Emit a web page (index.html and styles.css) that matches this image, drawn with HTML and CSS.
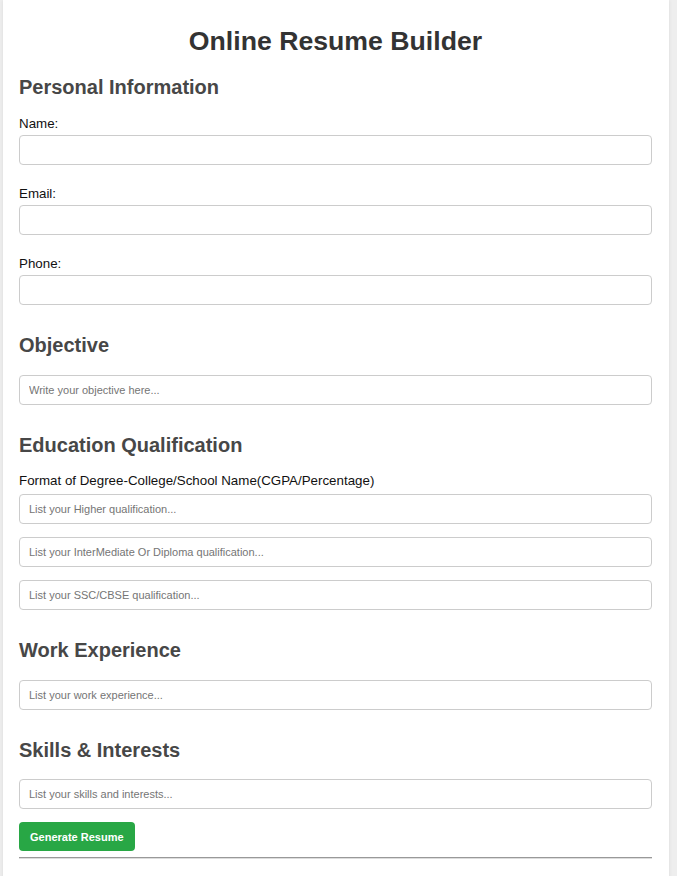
FILE: index.html
```html
<!DOCTYPE html>
<html lang="en">
<head>
<meta charset="utf-8">
<title>Online Resume Builder</title>
<link rel="stylesheet" href="styles.css">
</head>
<body>
<div class="page">
  <h1 class="title">Online Resume Builder</h1>
  <form class="form">
    <h2 class="section first">Personal Information</h2>
    <label class="label" for="name">Name:</label>
    <input class="field" id="name" type="text">
    <label class="label" for="email">Email:</label>
    <input class="field" id="email" type="email">
    <label class="label" for="phone">Phone:</label>
    <input class="field last" id="phone" type="tel">

    <h2 class="section">Objective</h2>
    <input class="field last" type="text" placeholder="Write your objective here...">

    <h2 class="section">Education Qualification</h2>
    <p class="note">Format of Degree-College/School Name(CGPA/Percentage)</p>
    <input class="field tight" type="text" placeholder="List your Higher qualification...">
    <input class="field tight" type="text" placeholder="List your InterMediate Or Diploma qualification...">
    <input class="field last" type="text" placeholder="List your SSC/CBSE qualification...">

    <h2 class="section">Work Experience</h2>
    <input class="field last" type="text" placeholder="List your work experience...">

    <h2 class="section">Skills &amp; Interests</h2>
    <input class="field tight" type="text" placeholder="List your skills and interests...">

    <div class="actions">
      <button class="btn" type="button">Generate Resume</button>
    </div>
  </form>
  <hr class="rule">
</div>
</body>
</html>
```

FILE: styles.css
```css
html, body {
  margin: 0;
  padding: 0;
}

body {
  background: #eeeeee;
  font-family: "Liberation Sans", Arial, sans-serif;
  padding-left: 3px;
}

.page {
  width: 633px;
  min-height: 900px;
  background: #ffffff;
  padding: 26px 17px 20px 16px;
  box-shadow: 0 0 4px rgba(0, 0, 0, 0.08);
}

.title {
  margin: 0;
  font-size: 26.67px;
  line-height: 31px;
  font-weight: bold;
  color: #333333;
  text-align: center;
}

.form {
  display: flex;
  flex-direction: column;
}

.section {
  margin: 29px 0 17.5px;
  font-size: 20px;
  line-height: 23px;
  font-weight: bold;
  color: #474747;
}

.section.first {
  margin: 19px 0 16.5px;
}

.label {
  display: block;
  font-size: 13.33px;
  line-height: 15px;
  color: #111111;
  margin-bottom: 4.5px;
}

.note {
  margin: -1px 0 6px;
  font-size: 13.33px;
  line-height: 15px;
  color: #111111;
}

.field {
  box-sizing: border-box;
  width: 100%;
  height: 30px;
  margin: 0 0 20.5px;
  padding: 0 9px;
  border: 1px solid #cccccc;
  border-radius: 4px;
  font-family: "Liberation Sans", Arial, sans-serif;
  font-size: 11px;
  color: #333333;
  background: #ffffff;
}

.field.tight {
  margin-bottom: 13px;
}

.field.last {
  margin-bottom: 0;
}

.field::placeholder {
  color: #757575;
}

.actions {
  display: flex;
}

.btn {
  height: 29px;
  padding: 0 11px;
  border: none;
  border-radius: 4px;
  background: #28a745;
  color: #ffffff;
  font-family: "Liberation Sans", Arial, sans-serif;
  font-size: 11px;
  font-weight: bold;
}

.rule {
  margin: 6px 0 0;
  border: 0;
  border-top: 1px solid #999999;
  border-bottom: 1px solid #dddddd;
  height: 0;
}
```
